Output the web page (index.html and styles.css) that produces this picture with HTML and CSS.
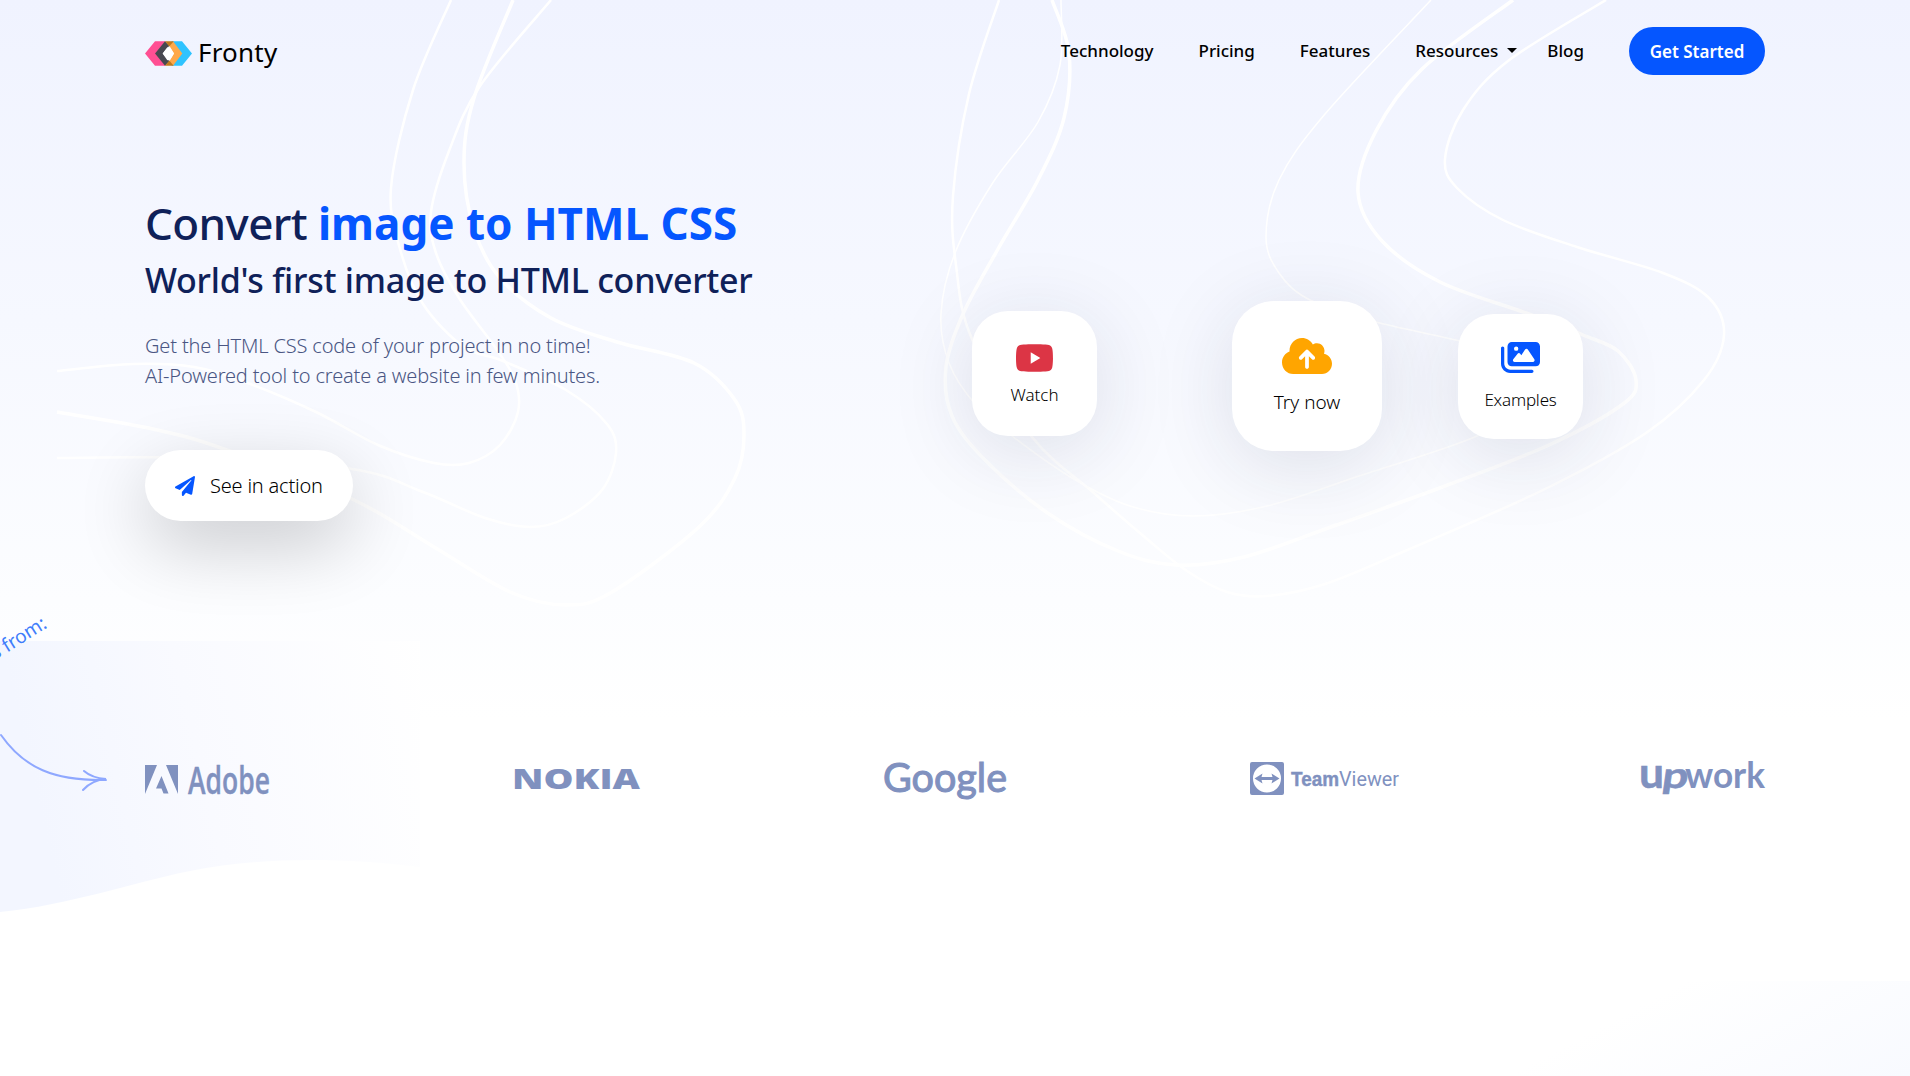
FILE: index.html
```
<!DOCTYPE html>
<html lang="en">
<head>
    <meta charset="UTF-8">
    <meta name="viewport" content="width=device-width, initial-scale=1.0">
    <title>Fronty - Image to HTML CSS converter</title>
    <link rel="stylesheet" href="styles.css">
</head>
<body>

<!-- Background lines -->
<svg class="bg-lines" id="bgLines" width="1910" height="640" viewBox="0 0 1910 640"></svg>

<!-- Header -->
<header class="header">
    <a class="logo" href="#">
        <svg width="47" height="25" viewBox="0 0 141 74">
            <path fill="#ff4f93" d="M0 37 30 0H62L32 37 62 74H30Z"/>
            <path fill="#2fc3ff" d="M141 37 111 0H79L109 37 79 74H111Z"/>
            <path fill="#484850" d="M30 37 60 0 73 14 53 37 73 60 60 74Z"/>
            <path fill="#ffa94a" d="M112 37 84 0 73 14 87 37 73 60 84 74Z"/>
            <path fill="#c27a1c" d="M60 0H86L73 16ZM60 74H86L73 58Z"/>
            <path fill="#fff" d="M53 37 67 18 76 20 87 37 76 55 67 57Z"/>
        </svg>
        <span>Fronty</span>
    </a>
    <nav class="nav">
        <a href="#">Technology</a>
        <a href="#">Pricing</a>
        <a href="#">Features</a>
        <a href="#" class="dropdown">Resources</a>
        <a href="#">Blog</a>
        <a href="#" class="btn-start">Get Started</a>
    </nav>
</header>

<!-- Hero -->
<section class="hero">
    <div class="hero-text">
        <h1>Convert <b>image to HTML CSS</b></h1>
        <h2>World's first image to HTML converter</h2>
        <p>Get the HTML CSS code of your project in no time!<br>AI-Powered tool to create a website in few minutes.</p>
        <a class="btn-action" href="#">
            <svg width="20" height="20" viewBox="0 0 512 512"><path fill="#0556ff" d="M476 3.2L12.5 270.6c-18.1 10.4-15.8 35.6 2.2 43.2L121 358.4l287.3-253.2c5.5-4.9 13.3 2.6 8.6 8.3L176 407v80.5c0 23.6 28.5 32.9 42.5 15.8L282 426l124.6 52.2c14.2 6 30.4-2.9 33-18.2l72-432C515 7.8 493.3-6.8 476 3.2z"/></svg>
            <span>See in action</span>
        </a>
    </div>
    <div class="cards">
        <a class="card card-watch" href="#">
            <svg width="39" height="32" viewBox="0 32 576 448" preserveAspectRatio="none"><path fill="#dc3545" d="M549.655 124.083c-6.281-23.65-24.787-42.276-48.284-48.597C458.781 64 288 64 288 64S117.22 64 74.629 75.486c-23.497 6.322-42.003 24.947-48.284 48.597-11.412 42.867-11.412 132.305-11.412 132.305s0 89.438 11.412 132.305c6.281 23.65 24.787 41.5 48.284 47.821C117.22 448 288 448 288 448s170.78 0 213.371-11.486c23.497-6.321 42.003-24.171 48.284-47.821 11.412-42.867 11.412-132.305 11.412-132.305s0-89.438-11.412-132.305zm-317.51 213.508V175.185l142.739 81.205-142.739 81.201z"/></svg>
            <span>Watch</span>
        </a>
        <a class="card card-try" href="#">
            <svg width="50" height="36" viewBox="0 32 640 448" preserveAspectRatio="none"><path fill="#ffa500" d="M144 480C64.5 480 0 415.5 0 336c0-62.8 40.2-116.2 96.2-135.9c-.1-2.7-.2-5.4-.2-8.1c0-88.4 71.6-160 160-160c59.3 0 111 32.2 138.7 80.2C409.9 102 428.3 96 448 96c53 0 96 43 96 96c0 12.2-2.3 23.8-6.4 34.6C596 238.4 640 290.1 640 352c0 70.7-57.3 128-128 128H144zm79-217c-9.4 9.4-9.4 24.6 0 33.9s24.6 9.4 33.9 0l39-39V392c0 13.3 10.7 24 24 24s24-10.7 24-24V257.9l39 39c9.4 9.4 24.6 9.4 33.9 0s9.4-24.6 0-33.9l-80-80c-9.4-9.4-24.6-9.4-33.9 0l-80 80z"/></svg>
            <span>Try now</span>
        </a>
        <a class="card card-examples" href="#">
            <svg width="39" height="31" viewBox="0 32 576 448" preserveAspectRatio="none"><path fill="#0556ff" d="M160 32c-35.3 0-64 28.7-64 64V320c0 35.3 28.7 64 64 64H512c35.3 0 64-28.7 64-64V96c0-35.3-28.7-64-64-64H160zM396 138.7l96 144c4.9 7.4 5.4 16.8 1.2 24.6S480.9 320 472 320H328 280 200c-9.2 0-17.6-5.3-21.6-13.6s-2.9-18.2 2.9-25.4l64-80c4.6-5.7 11.4-9 18.7-9s14.2 3.3 18.7 9l17.3 21.6 56-84C360.5 132 368 128 376 128s15.5 4 20 10.7zM192 128a32 32 0 1 1 64 0 32 32 0 1 1 -64 0zM48 120c0-13.3-10.7-24-24-24S0 106.7 0 120V344c0 75.1 60.9 136 136 136H456c13.3 0 24-10.7 24-24s-10.7-24-24-24H136c-48.6 0-88-39.4-88-88V120z"/></svg>
            <span>Examples</span>
        </a>
    </div>
</section>

<!-- Clients -->
<section class="clients">
    <svg class="clients-bg" width="420" height="271" viewBox="0 0 420 271">
        <defs>
            <linearGradient id="fade" x2="1" y2="-0.15">
                <stop offset="0" stop-color="#f3f6ff"/>
                <stop offset="0.4" stop-color="#f9faff"/>
                <stop offset="1" stop-color="#fff"/>
            </linearGradient>
        </defs>
        <path fill="url(#fade)" d="M0 0H420V226C340 216 260 216 190 230C130 242 70 264 0 271Z"/>
    </svg>
    <svg class="clients-note" width="120" height="200" viewBox="0 0 120 200">
        <text x="48" y="27" transform="rotate(-32 48 27)" text-anchor="end">s from:</text>
        <path d="M1 135C24 168 54 181 106 180M84 171Q92 178 106 179Q92 180 83 190"/>
    </svg>
    <div class="clients-row">
        <svg width="125" height="44" viewBox="0 0 125 44">
            <path d="M0 8H12L0 37ZM21 8H33V37ZM16.500 19 23.500 36.500H18.500L16.500 31.500H11Z"/>
            <text class="adobe" x="43" y="36.500" textLength="82" lengthAdjust="spacingAndGlyphs">Adobe</text>
        </svg>
        <svg width="126" height="44" viewBox="0 0 126 44">
            <text class="nokia" x="-2" y="32" textLength="128" lengthAdjust="spacingAndGlyphs">NOKIA</text>
        </svg>
        <svg width="122" height="44" viewBox="0 0 122 44">
            <text class="google" x="-1" y="35" textLength="124" lengthAdjust="spacingAndGlyphs">Google</text>
        </svg>
        <svg width="148" height="44" viewBox="0 0 148 44">
            <path fill-rule="evenodd" d="M2 5H32Q34 5 34 7V36Q34 38 32 38H2Q0 38 0 36V7Q0 5 2 5ZM17 7.500A14 14 0 1 0 17 35.500 14 14 0 1 0 17 7.500ZM4.500 21.500 12.500 16.500 11.500 20H22.500L21.500 16.500 29.500 21.500 21.500 26.500 22.500 23H11.500L12.500 26.500Z"/>
            <text class="team" x="41" y="28.500" textLength="48" lengthAdjust="spacingAndGlyphs">Team</text>
            <text class="viewer" x="89" y="28.500" textLength="60" lengthAdjust="spacingAndGlyphs">Viewer</text>
        </svg>
        <svg width="123" height="44" viewBox="0 0 123 44">
            <text class="upwork up-u" x="-3" y="30.500" textLength="25" lengthAdjust="spacingAndGlyphs">u</text>
            <text class="upwork" transform="translate(19 30.500) skewX(-8)" x="0" y="0" textLength="26" lengthAdjust="spacingAndGlyphs">p</text>
            <text class="upwork work" x="43" y="30.500" textLength="80" lengthAdjust="spacingAndGlyphs">work</text>
        </svg>
    </div>
</section>

<script>
    // Points of the decorative curves, joined by smooth segments
    const curves = [
        { width: 2.5, points: [[451,0],[413,90],[391,188],[400,249],[423,304],[464,347],[503,361],[566,390],[607,424],[616,453],[602,490],[566,518],[531,527],[485,518],[423,492],[352,469],[200,458],[57,458]] },
        { width: 3.5, points: [[513,0],[474,98],[464,163],[474,229],[500,278],[551,318],[617,342],[694,363],[735,400],[744,435],[735,478],[699,527],[612,592],[566,605],[510,592],[434,547],[352,499],[224,449],[153,429],[57,412]] },
        { width: 2.5, points: [[551,0],[480,86],[449,151],[431,212],[436,253],[459,298],[495,347],[515,380],[518,412],[500,445],[469,463],[434,463],[378,445],[316,412],[245,382],[194,367],[133,364],[57,371]] },
        { width: 2.5, points: [[999,0],[969,94],[953,196],[956,265],[972,339],[1032,437],[1095,494],[1147,539],[1187,571],[1227,592],[1267,596],[1325,584],[1405,551],[1543,490],[1646,433],[1704,380],[1724,335],[1709,298],[1663,273],[1577,247],[1503,220],[1457,188],[1445,159],[1463,110],[1508,61],[1606,0]] },
        { width: 3.5, points: [[1052,0],[1069,53],[1064,118],[1038,180],[998,249],[963,314],[946,367],[952,416],[986,461],[1049,514],[1118,551],[1176,565],[1244,557],[1331,527],[1445,486],[1549,445],[1623,404],[1636,380],[1618,351],[1583,335],[1526,313],[1440,282],[1382,241],[1358,192],[1376,131],[1422,69],[1513,0]] },
        { width: 1.5, points: [[1061,0],[1060,65],[1038,122],[992,184],[955,253],[941,314],[949,363],[975,404],[1012,436],[1072,478],[1130,506],[1193,516],[1267,506],[1359,476],[1477,436],[1530,400],[1520,360],[1460,341],[1376,322],[1310,300],[1279,273],[1266,237],[1279,180],[1325,114],[1431,0]] }
    ];

    function smoothPath(p) {
        let d = 'M' + p[0];
        for (let i = 0; i < p.length - 1; i++) {
            const a = p[i - 1] || p[i], b = p[i], c = p[i + 1], e = p[i + 2] || c;
            d += 'C' + [b[0] + (c[0] - a[0]) / 6, b[1] + (c[1] - a[1]) / 6,
                        c[0] - (e[0] - b[0]) / 6, c[1] - (e[1] - b[1]) / 6, c[0], c[1]];
        }
        return d;
    }

    const bgLines = document.getElementById('bgLines');
    curves.forEach(curve => {
        const path = document.createElementNS('http://www.w3.org/2000/svg', 'path');
        path.setAttribute('d', smoothPath(curve.points));
        path.setAttribute('stroke-width', curve.width);
        bgLines.appendChild(path);
    });
</script>

</body>
</html>
```
FILE: styles.css
```
* {
    box-sizing: border-box;
}
body {
    position: relative;
    margin: 0;
    height: 1076px;
    overflow: hidden;
    font-family: "Noto Sans", "Open Sans", sans-serif;
    color: #000;
    background: linear-gradient(#f0f3ff 0, #f6f8ff 320px, #fcfdff 600px, #fff 720px);
}
a {
    color: inherit;
    text-decoration: none;
}
svg {
    display: block;
}
.bg-lines {
    position: absolute;
    top: 0;
    left: 0;
    z-index: -1;
    fill: none;
    stroke: #fff;
}
.header {
    display: flex;
    justify-content: space-between;
    height: 102px;
    padding: 0 145px;
}
.logo {
    display: flex;
    align-items: center;
    gap: 6px;
    height: 107px;
    font-size: 26px;
}
.logo span {
    line-height: 36px;
    margin-top: -4px;
    letter-spacing: 0.2px;
}
.nav {
    display: flex;
    align-items: center;
    gap: 45px;
    font-size: 17px;
    font-weight: 500;
}
.nav a {
    margin-top: -2px;
}
.dropdown::after {
    content: "";
    display: inline-block;
    margin-left: 9px;
    margin-right: -15px;
    vertical-align: 4px;
    border: 5px solid transparent;
    border-top-color: #000;
    border-bottom: 0;
}
.nav .btn-start {
    width: 136px;
    height: 48px;
    margin-top: 0;
    line-height: 50px;
    border-radius: 24px;
    background: #0556ff;
    color: #fff;
    font-weight: 600;
    text-align: center;
}
.hero {
    display: flex;
    height: 539px;
    padding: 94px 145px 0;
}
.hero-text {
    width: 827px;
}
h1, h2 {
    margin: 0;
    color: #0f2159;
    font-weight: 500;
}
h1 {
    margin-bottom: 9px;
    font-size: 44px;
    line-height: 54px;
    letter-spacing: -0.6px;
}
h1 b {
    color: #0556ff;
    font-weight: 700;
    letter-spacing: 0;
}
h2 {
    font-size: 34px;
    line-height: 42px;
    letter-spacing: -0.24px;
}
.hero-text p {
    margin: 30px 0 59px;
    color: #4a5683;
    font-size: 20px;
    font-weight: 300;
    line-height: 30px;
    letter-spacing: -0.16px;
}
.btn-action {
    display: flex;
    align-items: center;
    gap: 15px;
    width: 208px;
    height: 71px;
    padding-left: 30px;
    border-radius: 36px;
    background: #fff;
    box-shadow: 0 24px 72px rgba(0, 0, 0, 0.2);
    font-size: 20px;
    font-weight: 300;
    letter-spacing: -0.2px;
}
.cards {
    display: flex;
    align-items: flex-start;
    margin-top: 105px;
}
.card {
    display: flex;
    flex-direction: column;
    align-items: center;
    width: 125px;
    height: 125px;
    border-radius: 36px;
    background: #fff;
    box-shadow: 0 14px 84px rgba(30, 36, 80, 0.13);
    font-size: 17px;
    font-weight: 300;
    line-height: 24px;
}
.card-watch {
    margin-top: 10px;
    padding-top: 31px;
}
.card-watch span {
    margin-top: 9px;
}
.card-try {
    width: 150px;
    height: 150px;
    margin: 0 76px 0 135px;
    padding-top: 37px;
    border-radius: 42px;
    font-size: 19px;
}
.card-try span {
    margin-top: 16px;
}
.card-examples {
    margin-top: 13px;
    padding-top: 28px;
}
.card-examples span {
    margin-top: 15px;
    letter-spacing: -0.2px;
}
.clients {
    position: relative;
    height: 435px;
    padding: 116px 145px 0;
}
.clients::after {
    content: "";
    position: absolute;
    right: 0;
    bottom: 0;
    width: 470px;
    height: 95px;
    background: linear-gradient(152deg, #fff 38%, #f8faff 100%);
}
.clients-bg {
    position: absolute;
    top: 0;
    left: 0;
}
.clients-note {
    position: absolute;
    top: -41px;
    left: 0;
    fill: none;
    stroke: #8fa8ff;
    stroke-width: 2;
    stroke-linecap: round;
}
.clients-note text {
    fill: #3f7dfb;
    stroke: none;
    font-size: 19px;
}
.clients-row {
    position: relative;
    display: flex;
    justify-content: space-between;
    fill: #8091bf;
}
.clients-row svg {
    overflow: visible;
}
.adobe {
    font: 600 38px "Open Sans", sans-serif;
    stroke: #8091bf;
    stroke-width: 0.4px;
}
.nokia {
    font: 800 29px "Open Sans", sans-serif;
}
.google {
    font: 400 41px Lato, sans-serif;
    stroke: #8091bf;
    stroke-width: 1.1px;
}
.team {
    font: 700 20px "Liberation Sans", sans-serif;
    stroke: #8091bf;
    stroke-width: 0.4px;
}
.viewer {
    font: 400 20px Roboto, sans-serif;
}
.upwork {
    font: 700 36px Lato, sans-serif;
    stroke: #8091bf;
    stroke-width: 0.6px;
}
.up-u {
    font-size: 42px;
}
.work {
    stroke-width: 0;
}
```
